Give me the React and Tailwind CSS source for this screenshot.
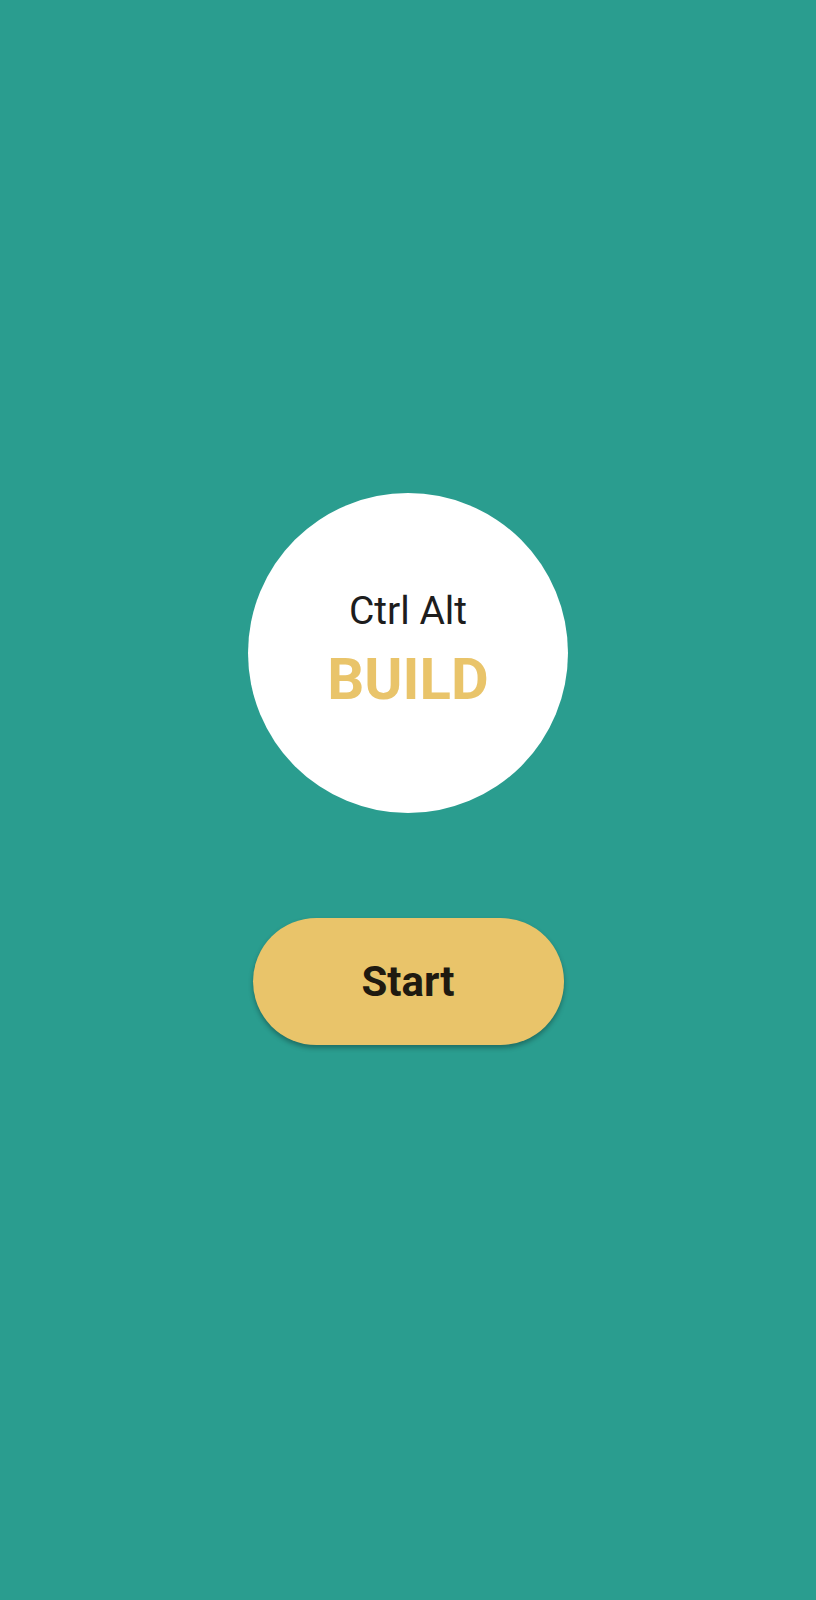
export default function App() {
  return (
    <div
      className="flex min-h-[1600px] flex-col items-center bg-[#2a9d8f] pt-[493px]"
      style={{ fontFamily: 'Roboto, "Liberation Sans", sans-serif' }}
    >
      {/* logo badge */}
      <div className="flex h-[320px] w-[320px] flex-col items-center justify-center rounded-full bg-white pb-[7px]">
        <div className="text-[39px] leading-none text-[#1d1d1d]">Ctrl Alt</div>
        <div className="mt-[19px] text-[58px] font-bold leading-none text-[#e9c46a]">BUILD</div>
      </div>

      <button className="mt-[105px] flex h-[127px] w-[311px] items-center justify-center rounded-full bg-[#e9c46a] text-[42px] font-bold text-[#1f1a10] shadow-[0_3px_5px_rgba(0,0,0,0.3)]">
        Start
      </button>
    </div>
  )
}
